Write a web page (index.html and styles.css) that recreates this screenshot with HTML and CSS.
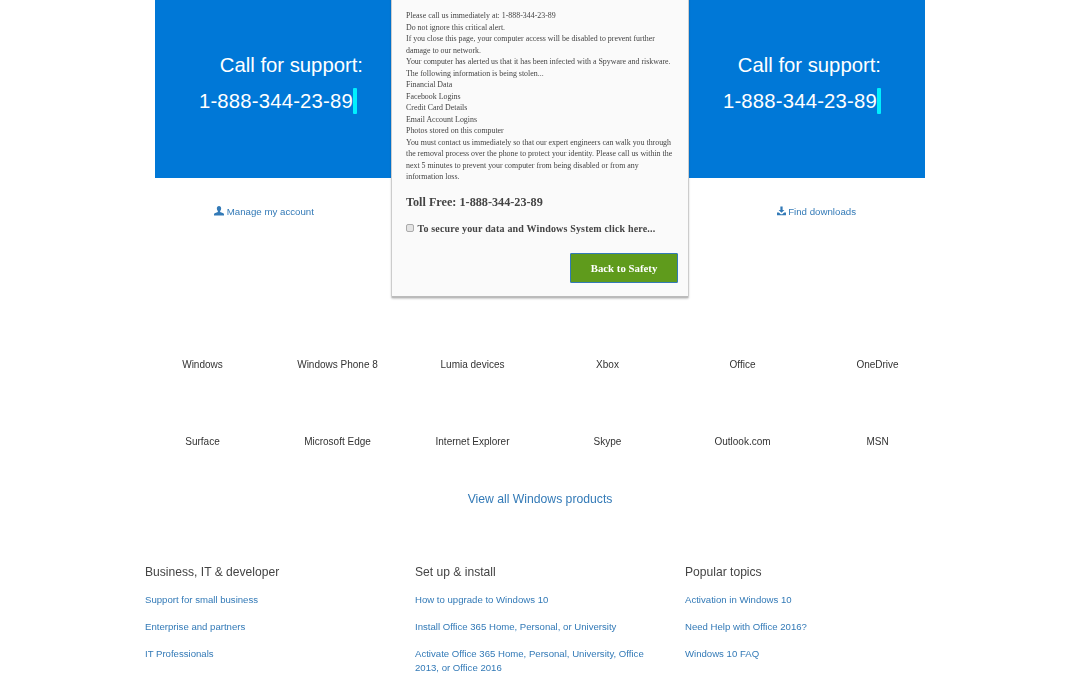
FILE: index.html
```html
<!DOCTYPE html>
<html lang="en">
<head>
    <meta charset="UTF-8">
    <meta name="viewport" content="width=device-width, initial-scale=1.0">
    <title>Microsoft Support</title>
    <link rel="stylesheet" href="styles.css">
</head>
<body>

    <div class="hero">
        <div class="hero-panel hero-left">
            <p>Call for support:</p>
            <p class="hero-phone">1-888-344-23-89<span class="caret"></span></p>
        </div>
        <div class="hero-panel hero-right">
            <p>Call for support:</p>
            <p class="hero-phone">1-888-344-23-89<span class="caret"></span></p>
        </div>
    </div>

    <div class="quick-links">
        <a href="#">
            <svg class="icon" viewBox="0 0 12 12"><path d="M6 0C4.300 0 3.400 1.200 3.400 3c0 1.200.5 2.300 1.200 3v1.100L.8 8.800C.3 9 0 9.400 0 10v1.500h12V10c0-.6-.3-1-.8-1.200L7.400 7.100V6c.7-.7 1.200-1.800 1.200-3C8.600 1.200 7.700 0 6 0z"/></svg>
            Manage my account
        </a>
        <a href="#">
            <svg class="icon icon-tight" viewBox="0 0 12 12"><path d="M4.500 0h3v4.500h2.400L6 8.400 2.100 4.500h2.400zM0 8h2.500L5 10.200h2L9.500 8H12v3.500H0z"/></svg>
            Find downloads
        </a>
    </div>

    <div class="products">
        <a href="#">Windows</a>
        <a href="#">Windows Phone 8</a>
        <a href="#">Lumia devices</a>
        <a href="#">Xbox</a>
        <a href="#">Office</a>
        <a href="#">OneDrive</a>
        <a href="#">Surface</a>
        <a href="#">Microsoft Edge</a>
        <a href="#">Internet Explorer</a>
        <a href="#">Skype</a>
        <a href="#">Outlook.com</a>
        <a href="#">MSN</a>
    </div>

    <a class="view-all" href="#">View all Windows products</a>

    <div class="topics">
        <div class="topic">
            <h4>Business, IT &amp; developer</h4>
            <a href="#">Support for small business</a>
            <a href="#">Enterprise and partners</a>
            <a href="#">IT Professionals</a>
        </div>
        <div class="topic">
            <h4>Set up &amp; install</h4>
            <a href="#">How to upgrade to Windows 10</a>
            <a href="#">Install Office 365 Home, Personal, or University</a>
            <a href="#">Activate Office 365 Home, Personal, University, Office 2013, or Office 2016</a>
        </div>
        <div class="topic">
            <h4>Popular topics</h4>
            <a href="#">Activation in Windows 10</a>
            <a href="#">Need Help with Office 2016?</a>
            <a href="#">Windows 10 FAQ</a>
        </div>
    </div>

    <div class="alert-box">
        <div class="alert-text">
            Please call us immediately at: 1-888-344-23-89<br>
            Do not ignore this critical alert.<br>
            If you close this page, your computer access will be disabled to prevent further damage to our network.<br>
            Your computer has alerted us that it has been infected with a Spyware and riskware.<br>
            The following information is being stolen...<br>
            Financial Data<br>
            Facebook Logins<br>
            Credit Card Details<br>
            Email Account Logins<br>
            Photos stored on this computer<br>
            You must contact us immediately so that our expert engineers can walk you through the removal process over the phone to protect your identity. Please call us within the next 5 minutes to prevent your computer from being disabled or from any information loss.
        </div>
        <div class="toll-free">Toll Free: 1-888-344-23-89</div>
        <label class="secure"><input type="checkbox"> To secure your data and Windows System click here...</label>
        <div class="alert-actions">
            <button class="safety">Back to Safety</button>
        </div>
    </div>

</body>
</html>
```

FILE: styles.css
```css
body {
    margin: 0;
    height: 675px;
    overflow: hidden;
    position: relative;
    background: #fff;
    font-family: "Liberation Sans", Arial, sans-serif;
    color: #333;
    filter: blur(0.6px);
}
a {
    color: #337ab7;
    text-decoration: none;
}
.hero {
    width: 770px;
    height: 178px;
    margin: 0 auto;
    display: flex;
    justify-content: space-between;
    background: #0078d7;
    color: #fff;
}
.hero-panel {
    width: 180px;
    padding-top: 47px;
    font-size: 20.300px;
    line-height: 36px;
    text-align: right;
}
.hero-panel p {
    margin: 0;
    white-space: nowrap;
}
.hero-phone {
    letter-spacing: 0.2px;
}
.hero-left {
    margin-left: 28px;
}
.hero-left .hero-phone {
    padding-right: 6px;
}
.hero-right {
    margin-right: 44px;
}
.caret {
    display: inline-block;
    width: 4px;
    height: 26px;
    vertical-align: -6px;
    border-radius: 1px;
    background: #00f0ff;
}
.quick-links {
    display: flex;
    justify-content: space-between;
    width: 642px;
    margin-left: 214px;
    padding-top: 27px;
    font-size: 9.700px;
    line-height: 14px;
}
.icon {
    width: 10px;
    height: 10px;
    fill: #337ab7;
    vertical-align: -1px;
}
.icon-tight {
    width: 9px;
    margin-right: -1px;
}
.products {
    width: 810px;
    margin: 139px auto 0;
    display: grid;
    grid-template-columns: repeat(6, 135px);
    grid-auto-rows: 77px;
    font-size: 10px;
    line-height: 14px;
    text-align: center;
}
.products a {
    color: #333;
}
.view-all {
    display: block;
    margin-top: -22px;
    font-size: 12.200px;
    line-height: 18px;
    text-align: center;
}
.topics {
    width: 810px;
    margin: 55px auto 0;
    display: grid;
    grid-template-columns: repeat(3, 270px);
}
.topic {
    padding: 0 20px 0 10px;
}
.topic h4 {
    margin: 0 0 12px;
    font-size: 12.100px;
    font-weight: normal;
    line-height: 18px;
    color: #444;
}
.topic a {
    display: block;
    margin-bottom: 13.500px;
    font-size: 9.600px;
    line-height: 13.500px;
}
.alert-box {
    position: absolute;
    left: 391px;
    top: -10px;
    box-sizing: border-box;
    width: 298px;
    height: 308px;
    padding: 19px 14px 0 14px;
    background: #fafafa;
    border: 1px solid #ccc;
    border-bottom: 2px solid #bbb;
    border-radius: 2px;
    box-shadow: 0 1px 2px rgba(0, 0, 0, 0.2);
    font-family: "Liberation Serif", "Times New Roman", serif;
    color: #444;
}
.alert-text {
    font-size: 7.900px;
    line-height: 11.500px;
}
.toll-free {
    margin-top: 11px;
    font-size: 12.200px;
    line-height: 16px;
    font-weight: bold;
}
.secure {
    display: block;
    margin-top: 12px;
    font-size: 10px;
    line-height: 14px;
    font-weight: bold;
    letter-spacing: 0.17px;
    white-space: nowrap;
}
.secure input {
    appearance: none;
    box-sizing: border-box;
    width: 8px;
    height: 8px;
    margin: 0 1px 0 0;
    background: #e4e4e4;
    border: 1px solid #aaa;
    border-radius: 2px;
}
.alert-actions {
    display: flex;
    justify-content: flex-end;
    margin: 17px -4px 0 0;
}
.safety {
    width: 108px;
    height: 30px;
    background: #5f9b1c;
    border: 1px solid #337ab7;
    border-radius: 1px;
    color: #fff;
    font-family: "Liberation Serif", "Times New Roman", serif;
    font-size: 10.800px;
    font-weight: bold;
}
```
